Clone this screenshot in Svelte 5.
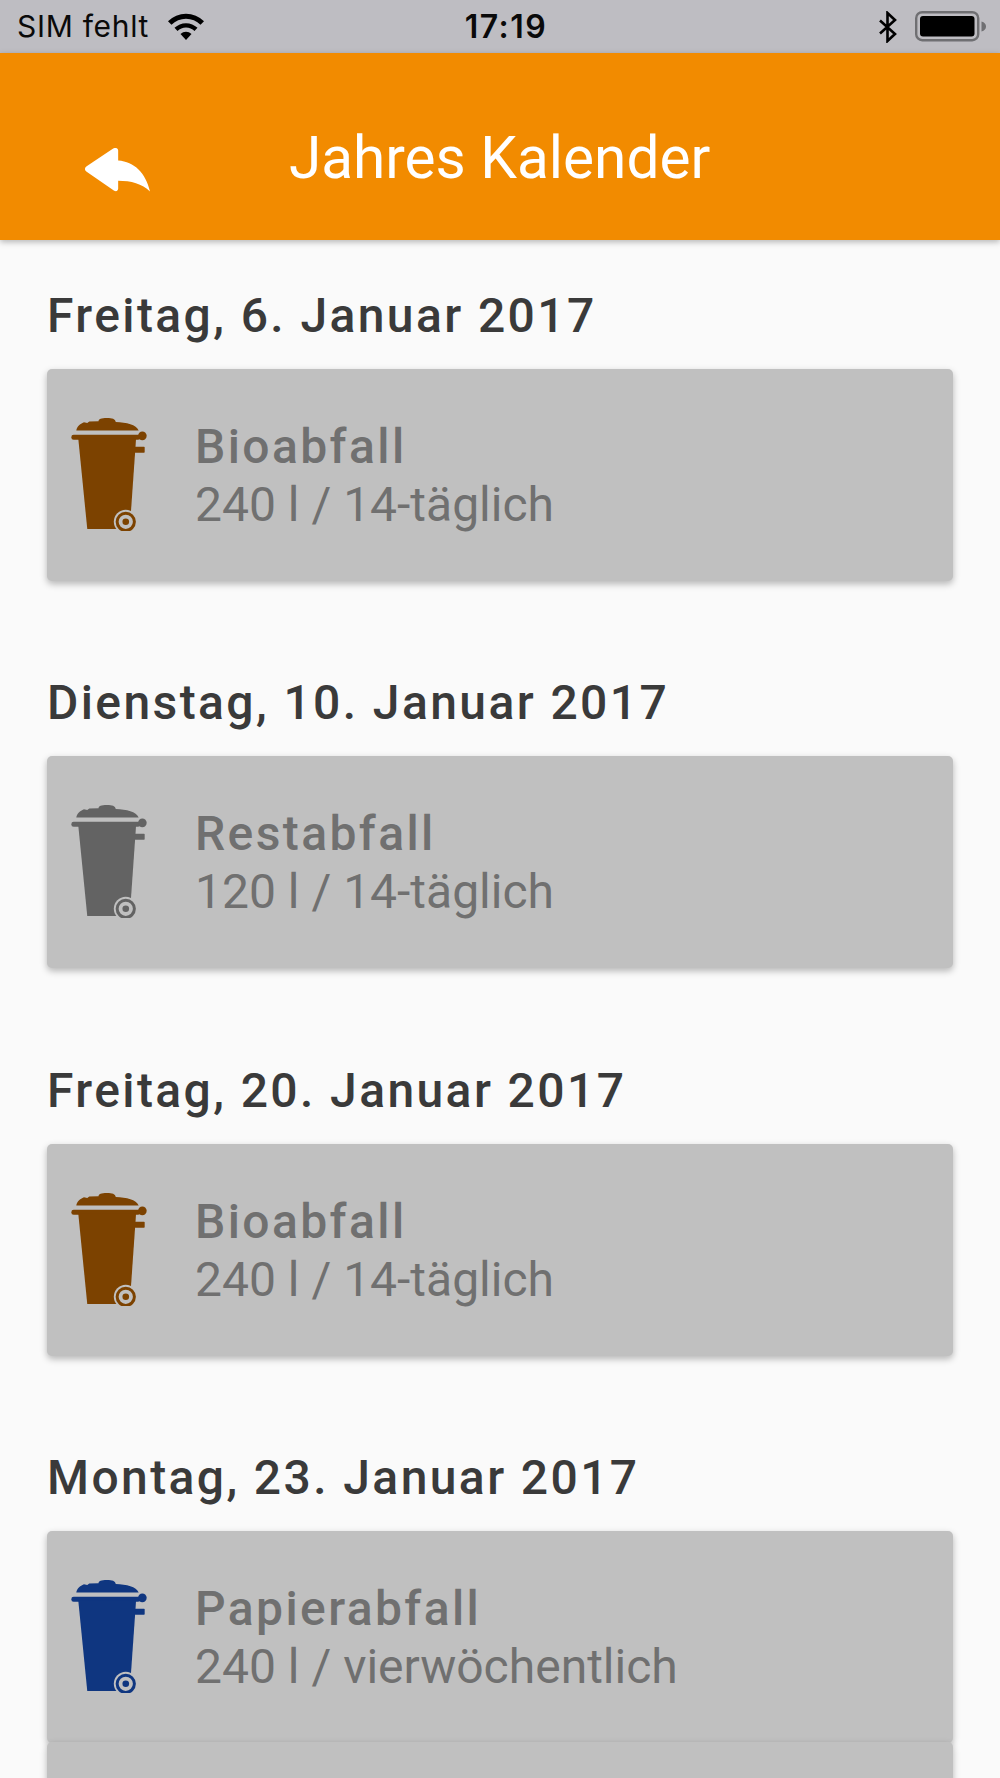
<script>
	const days = [
		{ date: 'Freitag, 6. Januar 2017', name: 'Bioabfall', info: '240 l / 14-täglich', color: '#7c4200' },
		{ date: 'Dienstag, 10. Januar 2017', name: 'Restabfall', info: '120 l / 14-täglich', color: '#636363' },
		{ date: 'Freitag, 20. Januar 2017', name: 'Bioabfall', info: '240 l / 14-täglich', color: '#7c4200' },
		{ date: 'Montag, 23. Januar 2017', name: 'Papierabfall', info: '240 l / vierwöchentlich', color: '#0f3680' }
	];
</script>

<div class="screen">
	<div class="status">
		<div class="status-left">
			<span class="carrier">SIM fehlt</span>
			<svg class="wifi" viewBox="0 0 38 28" aria-hidden="true">
				<path d="M19 27 L13.5 21 A8 8 0 0 1 24.500 21 Z" />
				<path d="M10.500 18 L7.500 14.800 A16.500 16.500 0 0 1 30.500 14.800 L27.500 18 A12 12 0 0 0 10.500 18 Z" />
				<path d="M4.500 11.800 L1 8.200 A25.500 25.500 0 0 1 37 8.200 L33.500 11.800 A20.500 20.500 0 0 0 4.500 11.800 Z" />
			</svg>
		</div>
		<span class="time">17:19</span>
		<div class="status-right">
			<svg class="bt" viewBox="0 0 20 32" aria-hidden="true">
				<path d="M2 9.500 L17 23 L9.500 30 V2 L17 9 L2 22.500" />
			</svg>
			<svg class="battery" viewBox="0 0 72 32" aria-hidden="true">
				<rect x="1.200" y="1.200" width="62" height="28" rx="6" class="shell" />
				<rect x="5" y="5" width="54.500" height="20.500" rx="3" />
				<path d="M66.500 10.500 C69.500 11.500 71 13 71 15.500 C71 18 69.500 19.500 66.500 20.500 Z" class="cap" />
			</svg>
		</div>
	</div>

	<header class="topbar">
		<svg class="back" viewBox="250 440 202 140" aria-hidden="true">
			<path d="M346 445 C351 446 353 449 353 453 L353 483 C402 487 436 520 449 576 C425 553 392 544 353 544 L353 568 C352 575 347 577 341 574 L258 517 C251 512 251 505 258 500 L338 447 C341 445 343 445 346 445 Z" />
		</svg>
		<h1>Jahres Kalender</h1>
	</header>

	<main class="list">
		{#each days as day}
			<section class="day">
				<h2>{day.date}</h2>
				<div class="card">
					<svg class="bin" viewBox="120 168 235 345" style="color: {day.color}" aria-hidden="true">
						<path fill="currentColor" d="M139 211 C141 198 150 192 162 186 L172 188 L178 184 L206 183 C206 176 214 173 231 173 C248 173 256 176 258 185 C290 187 320 192 327 211 Z" />
						<rect fill="currentColor" x="124" y="224" width="208" height="15" rx="7" />
						<circle fill="currentColor" cx="338" cy="227" r="13" />
						<rect fill="currentColor" x="315" y="260" width="30" height="18" rx="2" />
						<path fill="currentColor" d="M145 236 H319 L300 508 H172 Z" />
						<circle class="halo" cx="288" cy="486" r="36" />
						<circle class="wheel" cx="288" cy="486" r="26" fill="none" stroke="currentColor" />
						<circle fill="currentColor" cx="288" cy="486" r="10" />
					</svg>
					<div class="text">
						<div class="name">{day.name}</div>
						<div class="info">{day.info}</div>
					</div>
				</div>
			</section>
		{/each}
		<div class="card"></div>
	</main>
</div>

<style>
	:global(body) {
		margin: 0;
		background: #fafafa;
	}

	.screen {
		width: 1000px;
		height: 1778px;
		overflow: hidden;
		background: #fafafa;
		font-family: Roboto, sans-serif;
	}

	.status {
		display: grid;
		grid-template-columns: 1fr auto 1fr;
		align-items: center;
		height: 53px;
		padding: 0 13px 0 17px;
		box-sizing: border-box;
		background: #bebdc2;
		color: #0a0a0a;
		font-family: Inter, "Liberation Sans", sans-serif;
	}

	.status-left {
		display: flex;
		align-items: center;
		gap: 18px;
	}

	.carrier {
		font-size: 30px;
		letter-spacing: 0.700px;
		line-height: 53px;
	}

	.wifi {
		width: 38px;
		height: 28px;
		fill: #000;
	}

	.time {
		margin-left: 8px;
		font-size: 32px;
		font-weight: 600;
		letter-spacing: 1.500px;
	}

	.status-right {
		display: flex;
		justify-content: flex-end;
		align-items: center;
		gap: 17px;
	}

	.bt {
		width: 20px;
		height: 32px;
		fill: none;
		stroke: #000;
		stroke-width: 2.6;
	}

	.battery {
		width: 72px;
		height: 32px;
	}

	.shell {
		fill: none;
		stroke: #6f6f72;
		stroke-width: 2.4;
	}

	.cap {
		fill: #6f6f72;
	}

	.topbar {
		position: relative;
		display: flex;
		align-items: center;
		height: 187px;
		padding-left: 84px;
		box-sizing: border-box;
		background: #f28b00;
		box-shadow: 0 2px 6px rgba(0, 0, 0, 0.28);
	}

	.back {
		width: 67px;
		height: 47px;
		margin-top: 45px;
		fill: #fff;
	}

	h1 {
		margin: 0 0 0 138px;
		padding-top: 23px;
		font-size: 58.500px;
		font-weight: 400;
		line-height: 1;
		color: #fff;
	}

	.list {
		padding: 0 47px;
	}

	.day {
		height: 387.500px;
		padding-top: 49.500px;
		box-sizing: border-box;
	}

	.day:last-of-type {
		height: 339.500px;
	}

	h2 {
		margin: 0 0 27px;
		font-size: 48px;
		font-weight: 500;
		line-height: 52px;
		letter-spacing: 2.400px;
		color: #3a3a3a;
	}

	.card {
		display: flex;
		align-items: center;
		height: 212px;
		padding-left: 23px;
		box-sizing: border-box;
		border-radius: 5px;
		background: #c0c0c0;
		box-shadow: 0 3px 7px rgba(0, 0, 0, 0.28);
	}

	.bin {
		flex: none;
		width: 78px;
		height: 115px;
		margin-bottom: 3px;
	}

	.halo {
		fill: #c0c0c0;
	}

	.wheel {
		stroke-width: 9;
	}

	.text {
		margin-left: 47px;
		padding-top: 2px;
		color: #707070;
		font-size: 48px;
		line-height: 58px;
	}

	.name {
		font-weight: 500;
		letter-spacing: 2.400px;
	}
</style>
